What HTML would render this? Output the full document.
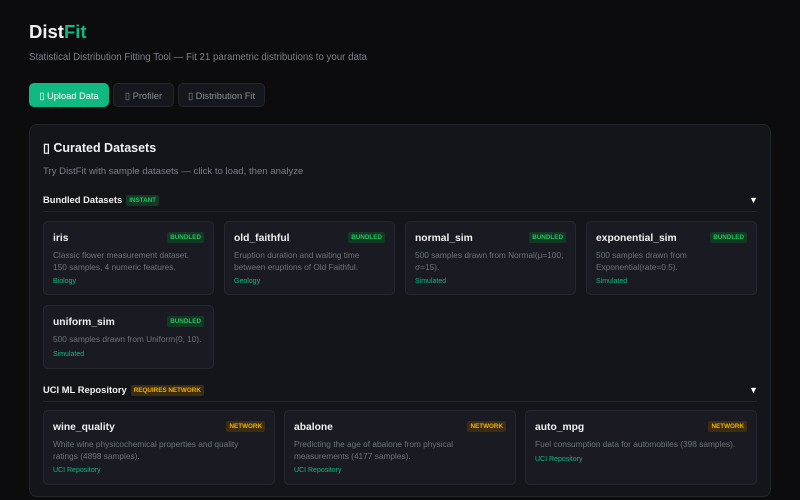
<!DOCTYPE html>
<html><head><meta charset="utf-8"><style>
*{box-sizing:border-box;margin:0;padding:0}
body{width:800px;height:500px;overflow:hidden;background:#0c0c0f;font-family:"Liberation Sans",sans-serif;color:#e5e7eb;position:relative}
.abs{position:absolute}
h1{position:absolute;left:29px;top:21px;font-size:18.5px;font-weight:bold;color:#f1f1f3}
h1 span{color:#10b981}
.sub{left:29px;top:52px;font-size:9.7px;color:#7b7f88}
.btn{position:absolute;top:83px;height:24px;border-radius:5px;font-size:9.3px;line-height:24px;text-align:center;border:1px solid #24262d;background:#16171c;color:#8a8d96}
.panel{left:29px;top:124px;width:742px;height:373px;background:#14151b;border:1px solid #24262d;border-radius:8px}
.h2{left:43px;top:140px;font-size:12.5px;font-weight:bold;color:#f1f1f3}
.desc{left:43px;top:166px;font-size:9.6px;color:#7b7f88}
.sec{font-size:9.4px;font-weight:bold;color:#f1f1f3}
.tag{display:inline-block;font-size:6.3px;font-weight:bold;padding:2px 3px;border-radius:2px;vertical-align:middle;margin-left:4px}
.g{background:#133824;color:#22c55e}
.o{background:#3d2c0f;color:#eab308}
.line{position:absolute;left:43px;width:714px;height:1px;background:#24262d}
.arrow{font-size:9px;color:#fff}
.card{position:absolute;background:#1a1b22;border:1px solid #262830;border-radius:5px;padding:10px 9px}
.card b{font-size:10.3px;color:#f1f1f3;display:block;margin-top:1px}
.card .tag{position:absolute;right:9px;top:10px}
.card p{font-size:8.3px;color:#6f727b;line-height:11.5px;margin-top:6px;white-space:nowrap}
.card i{font-style:normal;font-size:7px;color:#10b981;display:block;margin-top:5px}
</style></head><body>
<h1>Dist<span>Fit</span></h1>
<div class="abs sub">Statistical Distribution Fitting Tool — Fit 21 parametric distributions to your data</div>
<div class="btn" style="left:29px;width:80px;background:#10b981;border-color:#10b981;color:#fff">▯ Upload Data</div>
<div class="btn" style="left:113px;width:61px">▯ Profiler</div>
<div class="btn" style="left:178px;width:87px">▯ Distribution Fit</div>
<div class="abs panel"></div>
<div class="abs h2">▯ Curated Datasets</div>
<div class="abs desc">Try DistFit with sample datasets — click to load, then analyze</div>
<div class="abs sec" style="left:43px;top:194px">Bundled Datasets<span class="tag g">INSTANT</span></div>
<div class="abs arrow" style="left:749px;top:195px">▼</div>
<div class="line" style="top:211px"></div>
<div class="card" style="left:43px;top:221px;width:171px;height:74px"><b>iris</b><span class="tag g">BUNDLED</span><p>Classic flower measurement dataset.<br>150 samples, 4 numeric features.</p><i>Biology</i></div>
<div class="card" style="left:224px;top:221px;width:171px;height:74px"><b>old_faithful</b><span class="tag g">BUNDLED</span><p>Eruption duration and waiting time<br>between eruptions of Old Faithful.</p><i>Geology</i></div>
<div class="card" style="left:405px;top:221px;width:171px;height:74px"><b>normal_sim</b><span class="tag g">BUNDLED</span><p>500 samples drawn from Normal(μ=100,<br>σ=15).</p><i>Simulated</i></div>
<div class="card" style="left:586px;top:221px;width:171px;height:74px"><b>exponential_sim</b><span class="tag g">BUNDLED</span><p>500 samples drawn from<br>Exponential(rate=0.5).</p><i>Simulated</i></div>
<div class="card" style="left:43px;top:305px;width:171px;height:64px"><b>uniform_sim</b><span class="tag g">BUNDLED</span><p>500 samples drawn from Uniform(0, 10).</p><i>Simulated</i></div>
<div class="abs sec" style="left:43px;top:384px">UCI ML Repository<span class="tag o">REQUIRES NETWORK</span></div>
<div class="abs arrow" style="left:749px;top:385px">▼</div>
<div class="line" style="top:401px"></div>
<div class="card" style="left:43px;top:410px;width:232px;height:75px"><b>wine_quality</b><span class="tag o">NETWORK</span><p>White wine physicochemical properties and quality<br>ratings (4898 samples).</p><i>UCI Repository</i></div>
<div class="card" style="left:284px;top:410px;width:232px;height:75px"><b>abalone</b><span class="tag o">NETWORK</span><p>Predicting the age of abalone from physical<br>measurements (4177 samples).</p><i>UCI Repository</i></div>
<div class="card" style="left:525px;top:410px;width:232px;height:75px"><b>auto_mpg</b><span class="tag o">NETWORK</span><p>Fuel consumption data for automobiles (398 samples).</p><i>UCI Repository</i></div>
</body></html>
